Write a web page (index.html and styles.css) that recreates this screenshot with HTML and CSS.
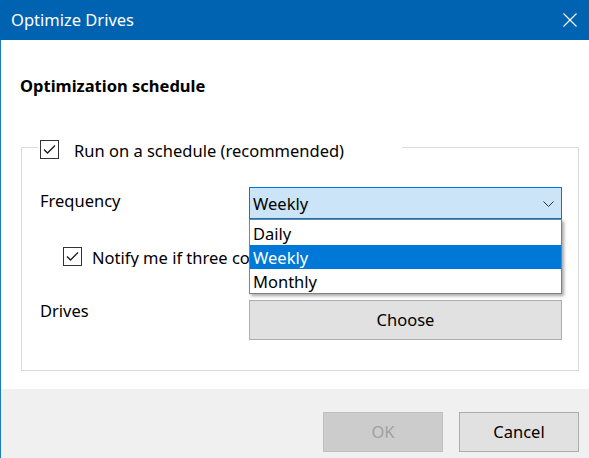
FILE: index.html
```html
<!DOCTYPE html>
<html lang="en">
<head>
<meta charset="utf-8">
<title>Optimize Drives</title>
<link rel="stylesheet" href="styles.css">
</head>
<body>
<div class="window">
  <div class="titlebar">
    <span class="title">Optimize Drives</span>
    <svg class="close" width="14" height="14" viewBox="0 0 14 14"><path d="M0.5 0.5 L13.5 13.5 M13.5 0.5 L0.5 13.5" stroke="#fff" stroke-width="1.1" fill="none"/></svg>
  </div>
  <div class="content">
    <h2 class="heading">Optimization schedule</h2>
    <fieldset class="group">
      <legend class="legend">
        <span class="check"><svg width="17" height="17" viewBox="0 0 17 17"><path d="M3 8.5 L6.5 12 L14 4.5" stroke="#1a1a1a" stroke-width="1.3" fill="none"/></svg></span>
        <span class="legend-text">Run on a schedule (recommended)</span>
      </legend>
      <div class="group-body">
        <div class="row freq">
          <span class="label label-freq">Frequency</span>
          <div class="combo">
            <div class="combo-box">
              <span class="combo-value">Weekly</span>
              <svg class="chevron" width="11" height="6" viewBox="0 0 11 6"><path d="M0.5 0.5 L5.5 5.5 L10.5 0.5" stroke="#333" stroke-width="1" fill="none"/></svg>
            </div>
            <ul class="dropdown">
              <li class="item first">Daily</li>
              <li class="item selected">Weekly</li>
              <li class="item">Monthly</li>
            </ul>
          </div>
        </div>
        <div class="row notify">
          <span class="check"><svg width="17" height="17" viewBox="0 0 17 17"><path d="M3 8.5 L6.5 12 L14 4.5" stroke="#1a1a1a" stroke-width="1.3" fill="none"/></svg></span>
          <span class="notify-text">Notify me if three consecutive scheduled runs are missed</span>
        </div>
        <div class="row drives">
          <span class="label">Drives</span>
          <button class="btn choose">Choose</button>
        </div>
      </div>
    </fieldset>
  </div>
  <div class="footer">
    <button class="btn footer-btn disabled" disabled>OK</button>
    <button class="btn footer-btn">Cancel</button>
  </div>
</div>
</body>
</html>
```
FILE: styles.css
```css
* { box-sizing: border-box; }
html, body { margin: 0; padding: 0; }
body {
  width: 589px;
  height: 458px;
  overflow: hidden;
  background: #fff;
  color: #000;
  font-family: "Noto Sans", "Open Sans", sans-serif;
  font-size: 16.5px;
}
.window {
  height: 458px;
  display: flex;
  flex-direction: column;
}
.titlebar {
  height: 40px;
  flex: none;
  background: #0063b1;
  display: flex;
  align-items: center;
  justify-content: space-between;
  padding: 0 12px 0 11px;
}
.title {
  color: #fff;
  font-size: 16.5px;
  line-height: 22px;
  margin-top: -1px;
}
.close { display: block; }
.content {
  flex: 1;
  border-left: 1px solid #1979ca;
  padding: 35px 10px 0 19px;
}
.heading {
  margin: 0;
  font-size: 16.5px;
  font-weight: bold;
  line-height: 22px;
}
.group {
  margin: 38px 0 0 1px;
  padding: 0;
  border: 1px solid #dadada;
  min-width: 0;
}
.legend {
  margin-left: 16px;
  padding: 0 2px;
  width: 364px;
  height: 24px;
  display: flex;
  align-items: flex-start;
}
.check {
  width: 19px;
  height: 19px;
  flex: none;
  border: 1px solid #333;
  background: #fff;
  display: flex;
  align-items: center;
  justify-content: center;
}
.check svg { display: block; }
.legend .check { margin-top: 5px; }
.legend-text {
  margin-top: 5px;
  margin-left: 15px;
  line-height: 22px;
  white-space: nowrap;
}
.group-body {
  padding: 28px 16px 30px 18px;
}
.row { display: flex; }
.label {
  width: 209px;
  flex: none;
  line-height: 22px;
}
.label-freq { padding-top: 3px; }
.freq { height: 32px; }
.combo {
  flex: 1;
  position: relative;
}
.combo-box {
  height: 32px;
  border: 1px solid #0078d7;
  background: #cce4f7;
  display: flex;
  align-items: flex-start;
  padding: 5px 7px 0 3px;
}
.combo-value { line-height: 22px; }
.chevron {
  display: block;
  margin-left: auto;
  align-self: center;
  margin-top: -4px;
}
.dropdown {
  position: absolute;
  top: 32px;
  left: 0;
  right: 0;
  margin: 0;
  padding: 0;
  list-style: none;
  background: #fff;
  border: 1px solid #828282;
  box-shadow: 2px 2px 3px rgba(0, 0, 0, 0.35);
  z-index: 2;
}
.item {
  height: 24px;
  padding: 2px 0 0 3px;
  line-height: 22px;
}
.item.first { height: 25px; padding-top: 3px; }
.item.selected { background: #0078d7; color: #fff; }
.notify {
  margin-top: 28px;
  height: 20px;
  padding-left: 23px;
  overflow: hidden;
  white-space: nowrap;
}
.notify-text {
  margin-left: 10px;
  line-height: 22px;
}
.drives { margin-top: 33px; }
.btn {
  font-family: inherit;
  font-size: 16.5px;
  color: #000;
  background: #e1e1e1;
  border: 1px solid #adadad;
  height: 40px;
  padding: 0;
  line-height: 22px;
}
.choose { flex: 1; }
.footer {
  height: 69px;
  flex: none;
  background: #f0f0f0;
  border-left: 1px solid #1979ca;
  display: flex;
  justify-content: flex-end;
  align-items: flex-start;
  gap: 16px;
  padding: 23px 10px 0 0;
}
.footer-btn { width: 120px; }
.footer-btn.disabled {
  background: #cccccc;
  border-color: #bfbfbf;
  color: #a0a0a0;
}
```
